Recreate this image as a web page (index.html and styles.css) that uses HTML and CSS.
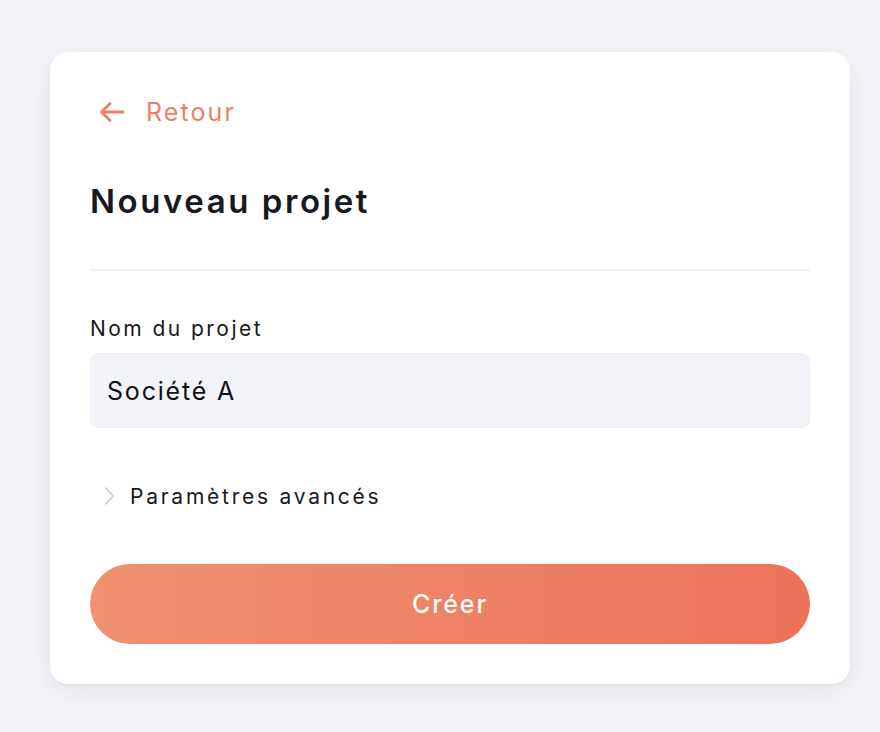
FILE: index.html
```html
<!DOCTYPE html>
<html lang="fr">
<head>
<meta charset="utf-8">
<title>Nouveau projet</title>
<link rel="stylesheet" href="styles.css">
</head>
<body>
<main class="page">
  <section class="card">
    <a class="back" href="#">
      <svg class="back-icon" width="28" height="24" viewBox="0 0 28 24" aria-hidden="true">
        <path d="M25 12H4M12 3.5L3.5 12L12 20.5" fill="none" stroke="#ee7f65" stroke-width="3" stroke-linecap="round" stroke-linejoin="round"/>
      </svg>
      <span>Retour</span>
    </a>
    <h1 class="title">Nouveau projet</h1>
    <hr class="divider">
    <label class="label" for="name">Nom du projet</label>
    <div class="input" id="name">Société A</div>
    <div class="advanced">
      <svg class="chevron" width="14" height="20" viewBox="0 0 14 20" aria-hidden="true">
        <path d="M4 2L11 10L4 18" fill="none" stroke="#c9c9cc" stroke-width="1.6" stroke-linecap="round" stroke-linejoin="round"/>
      </svg>
      <span>Paramètres avancés</span>
    </div>
    <button class="submit" type="button">Créer</button>
  </section>
</main>
</body>
</html>
```
FILE: styles.css
```css
* { box-sizing: border-box; }
html, body {
  margin: 0;
  padding: 0;
  background: #f3f4f8;
  font-family: "Inter", "Open Sans", sans-serif;
}
.page {
  padding: 52px 30px 48px 50px;
}
.card {
  width: 800px;
  height: 632px;
  background: #ffffff;
  border-radius: 18px;
  box-shadow: 0 8px 24px rgba(30, 35, 60, 0.07), 0 1px 3px rgba(30, 35, 60, 0.04);
  padding: 40px 40px 0 40px;
  display: flex;
  flex-direction: column;
}
.back {
  display: flex;
  align-items: center;
  gap: 20px;
  height: 40px;
  margin-left: 8px;
  color: #ee7f65;
  text-decoration: none;
  font-size: 25px;
  font-weight: 400;
  letter-spacing: 2.1px;
}
.title {
  margin: 41px 0 0 0;
  height: 56px;
  line-height: 56px;
  font-size: 33px;
  font-weight: 600;
  color: #18181f;
  letter-spacing: 2.55px;
}
.divider {
  margin: 40px 0 0 0;
  border: 0;
  border-top: 2px solid #f0f1f4;
  height: 0;
}
.label {
  margin-top: 43px;
  font-size: 21px;
  line-height: 30px;
  color: #18181f;
  letter-spacing: 2.45px;
}
.input {
  margin-top: 9px;
  height: 75px;
  border-radius: 9px;
  background: #f3f4f9;
  border: 1px solid #eceef2;
  padding: 0 16px;
  display: flex;
  align-items: center;
  font-size: 25px;
  color: #101114;
  letter-spacing: 1.8px;
}
.advanced {
  margin-top: 53px;
  display: flex;
  align-items: center;
  gap: 14px;
  padding-left: 12px;
  height: 30px;
  font-size: 21px;
  color: #18181f;
  letter-spacing: 2.75px;
}
.submit {
  margin-top: 53px;
  height: 80px;
  width: 100%;
  border: 0;
  border-radius: 40px;
  background: linear-gradient(90deg, #f09170 0%, #ec735a 100%);
  color: #ffffff;
  font-family: inherit;
  font-size: 25px;
  font-weight: 500;
  letter-spacing: 1.9px;
}
```
